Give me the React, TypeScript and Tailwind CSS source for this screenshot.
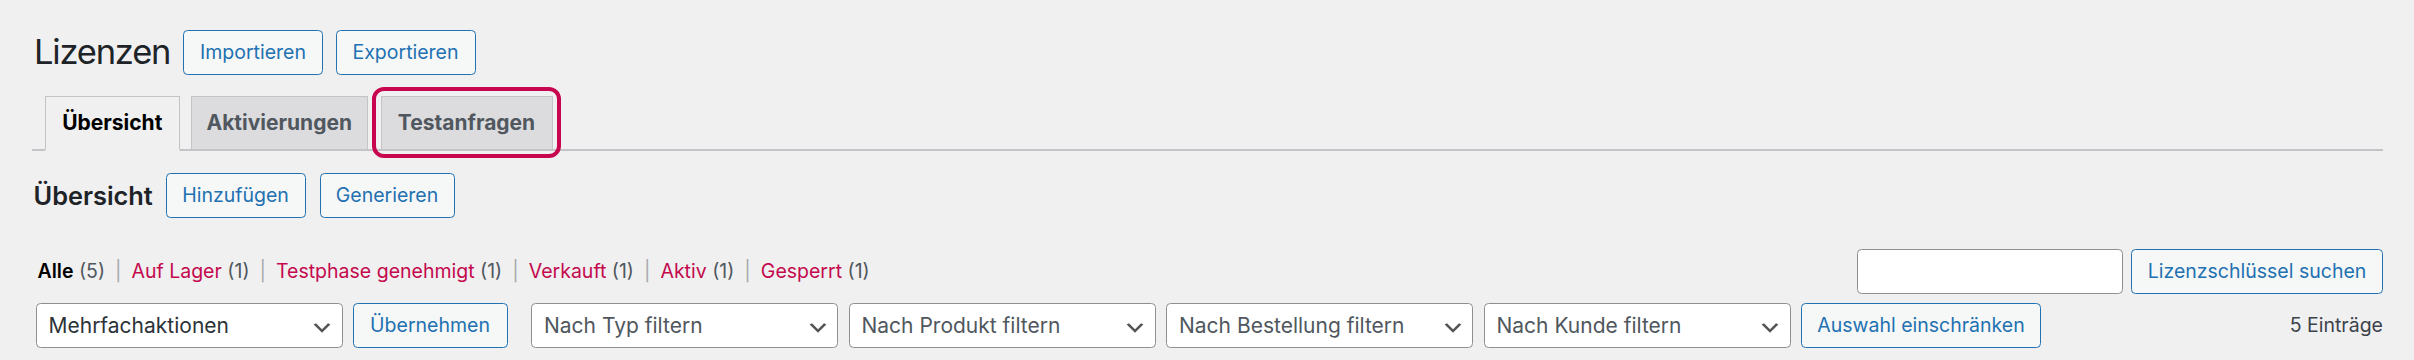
import React from "react";

const SEL_ARROW = "M5 6l5 5 5-5 2 1-7 7-7-7 2-1z";

function Button({ className = "", children }: { className?: string; children: React.ReactNode }) {
  return (
    <button
      type="button"
      className={`flex h-[45px] shrink-0 items-center justify-center rounded-[4.5px] border-[1.5px] border-[#2271b1] bg-[#f6f7f7] text-[19.5px] leading-none text-[#2271b1] ${className}`}
    >
      {children}
    </button>
  );
}

function Select({ label, dark = false, className = "" }: { label: string; dark?: boolean; className?: string }) {
  return (
    <div
      className={`relative flex h-[45px] w-[307px] shrink-0 items-center rounded-[4.5px] border-[1.5px] border-[#8c8f94] bg-white pl-[12px] text-[21px] leading-none ${
        dark ? "text-[#2c3338]" : "text-[#50575e]"
      } ${className}`}
    >
      {label}
      <svg viewBox="0 0 20 20" className="absolute right-[7.5px] top-[11.5px] h-[24px] w-[24px]">
        <path d={SEL_ARROW} fill="#555" />
      </svg>
    </div>
  );
}

function Tab({ label, active = false, className = "", children }: { label: string; active?: boolean; className?: string; children?: React.ReactNode }) {
  return (
    <div
      className={`relative -mb-[2px] flex h-[55.5px] shrink-0 items-center justify-center border-[1.5px] border-[#c3c4c7] text-[21px] font-bold leading-none ${
        active ? "border-b-[2px] border-b-[#f0f0f1] bg-[#f0f0f1] text-black" : "border-b-[2px] bg-[#dcdcde] text-[#50575e]"
      } ${className}`}
    >
      {label}
      {children}
    </div>
  );
}

const statuses = [
  { label: "Auf Lager", count: 1 },
  { label: "Testphase genehmigt", count: 1 },
  { label: "Verkauft", count: 1 },
  { label: "Aktiv", count: 1 },
  { label: "Gesperrt", count: 1 },
];

export default function App() {
  return (
    <div className="min-h-screen bg-[#f0f0f1] pl-[32px] pr-[31px] pt-[30px] font-['Inter','Noto_Sans',sans-serif]">
      {/* title */}
      <div className="flex h-[45px] items-center">
        <h1 className="w-[151px] pl-[2px] text-[34.5px] font-normal leading-none tracking-[-0.035em] text-[#1d2327]">Lizenzen</h1>
        <Button className="w-[140px]">Importieren</Button>
        <Button className="ml-[12.5px] w-[140px]">Exportieren</Button>
      </div>

      {/* tabs */}
      <nav className="mt-[20.5px] flex items-end border-b-2 border-[#c3c4c7] pl-[12.5px]">
        <Tab label="Übersicht" active className="w-[135.5px]" />
        <Tab label="Aktivierungen" className="ml-[11px] w-[176.5px]" />
        <Tab label="Testanfragen" className="ml-[13px] w-[172px]">
          <span className="pointer-events-none absolute -bottom-[9px] -left-[10px] -right-[9px] -top-[9.5px] rounded-[12px] border-4 border-[#c80650]" />
        </Tab>
      </nav>

      {/* section heading */}
      <div className="mt-[22px] flex h-[45px] items-center">
        <h2 className="w-[133.5px] pl-[1.5px] text-[25.35px] font-semibold leading-none text-[#1d2327]">Übersicht</h2>
        <Button className="w-[140px]">Hinzufügen</Button>
        <Button className="ml-[14px] w-[135px]">Generieren</Button>
      </div>

      {/* status links + search */}
      <div className="mt-[31px] flex h-[45px] items-center justify-between">
        <ul className="ml-[5.5px] flex items-center text-[19.5px] leading-none text-[#50575e]">
          <li>
            <span className="font-semibold text-black">Alle</span> (5)
          </li>
          {statuses.map((s) => (
            <li key={s.label} className="flex items-center">
              <span className="px-[10px] text-[#a7aaad]">|</span>
              <span className="text-[#c4094d]">{s.label}</span>
              <span>&nbsp;({s.count})</span>
            </li>
          ))}
        </ul>
        <div className="flex items-center">
          <div className="h-[45px] w-[266px] rounded-[4.5px] border-[1.5px] border-[#8c8f94] bg-white" />
          <Button className="ml-[8px] w-[252px]">Lizenzschlüssel suchen</Button>
        </div>
      </div>

      {/* table nav */}
      <div className="mt-[9px] flex h-[45px] items-center">
        <Select label="Mehrfachaktionen" dark className="ml-[3.5px]" />
        <Button className="ml-[10px] w-[155px]">Übernehmen</Button>
        <Select label="Nach Typ filtern" className="ml-[23.5px]" />
        <Select label="Nach Produkt filtern" className="ml-[10.5px]" />
        <Select label="Nach Bestellung filtern" className="ml-[10.5px]" />
        <Select label="Nach Kunde filtern" className="ml-[10.5px]" />
        <Button className="ml-[10.5px] w-[240px]">Auswahl einschränken</Button>
        <span className="ml-auto text-[19.5px] leading-none text-[#3c434a]">5 Einträge</span>
      </div>
    </div>
  );
}
